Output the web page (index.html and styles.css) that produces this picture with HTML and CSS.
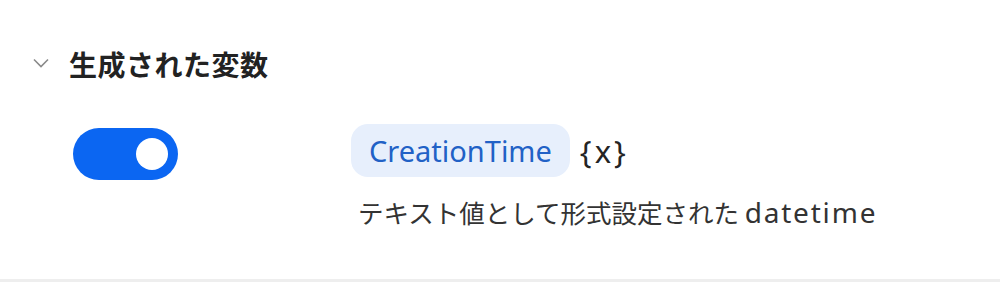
FILE: index.html
```html
<!DOCTYPE html>
<html lang="ja">
<head>
<meta charset="utf-8">
<link rel="stylesheet" href="styles.css">
</head>
<body>
<div class="panel">
  <div class="header">
    <svg class="chevron" width="16" height="10" viewBox="0 0 16 10"><path d="M1 1.5 L8 8.5 L15 1.5" fill="none" stroke="#8a8a8a" stroke-width="1.6"/></svg>
    <span class="title">生成された変数</span>
  </div>
  <div class="row">
    <div class="toggle-col">
      <div class="toggle"><div class="knob"></div></div>
    </div>
    <div class="var-col">
      <div class="var-line">
        <span class="pill">CreationTime</span>
        <span class="curly">{x}</span>
      </div>
      <div class="desc">テキスト値として形式設定された <span class="latin">datetime</span></div>
    </div>
  </div>
  <div class="divider"></div>
</div>
</body>
</html>
```
FILE: styles.css
```css
html, body {
  margin: 0;
  padding: 0;
  background: #ffffff;
}
body {
  width: 1000px;
  height: 301px;
  overflow: hidden;
  font-family: "Noto Sans", "Noto Sans CJK JP", sans-serif;
  color: #242424;
}
.panel {
  display: flex;
  flex-direction: column;
}
.header {
  display: flex;
  align-items: center;
  height: 40px;
  margin-top: 44px;
  padding-left: 33px;
}
.chevron {
  margin-right: 20px;
  margin-bottom: 3px;
}
.title {
  font-family: "Noto Sans CJK JP", sans-serif;
  font-weight: 700;
  font-size: 28px;
  letter-spacing: 0.5px;
  color: #222;
}
.row {
  display: flex;
  margin-top: 40px;
}
.toggle-col {
  width: 278px;
  padding-left: 73px;
  padding-top: 4px;
  box-sizing: content-box;
}
.toggle {
  width: 105px;
  height: 52px;
  border-radius: 26px;
  background: #0b66f2;
  display: flex;
  align-items: center;
  justify-content: flex-end;
  padding-right: 10px;
  box-sizing: border-box;
}
.knob {
  width: 32px;
  height: 32px;
  border-radius: 50%;
  background: #ffffff;
}
.var-col {
  display: flex;
  flex-direction: column;
}
.var-line {
  display: flex;
  align-items: center;
}
.pill {
  display: inline-flex;
  align-items: center;
  height: 53px;
  padding: 0 18px;
  border-radius: 17px;
  background: #e7effc;
  color: #2161c6;
  font-size: 29px;
}
.curly {
  margin-left: 10px;
  font-size: 31px;
  letter-spacing: 3px;
  color: #242424;
}
.desc {
  margin-top: 16px;
  padding-left: 7px;
  font-family: "Noto Sans CJK JP", sans-serif;
  font-size: 25.5px;
  color: #333;
}
.latin {
  font-family: "Noto Sans", sans-serif;
  font-size: 28px;
  letter-spacing: 1.8px;
}
.divider {
  margin-top: 48px;
  height: 3px;
  background: #eeeeee;
}
```
